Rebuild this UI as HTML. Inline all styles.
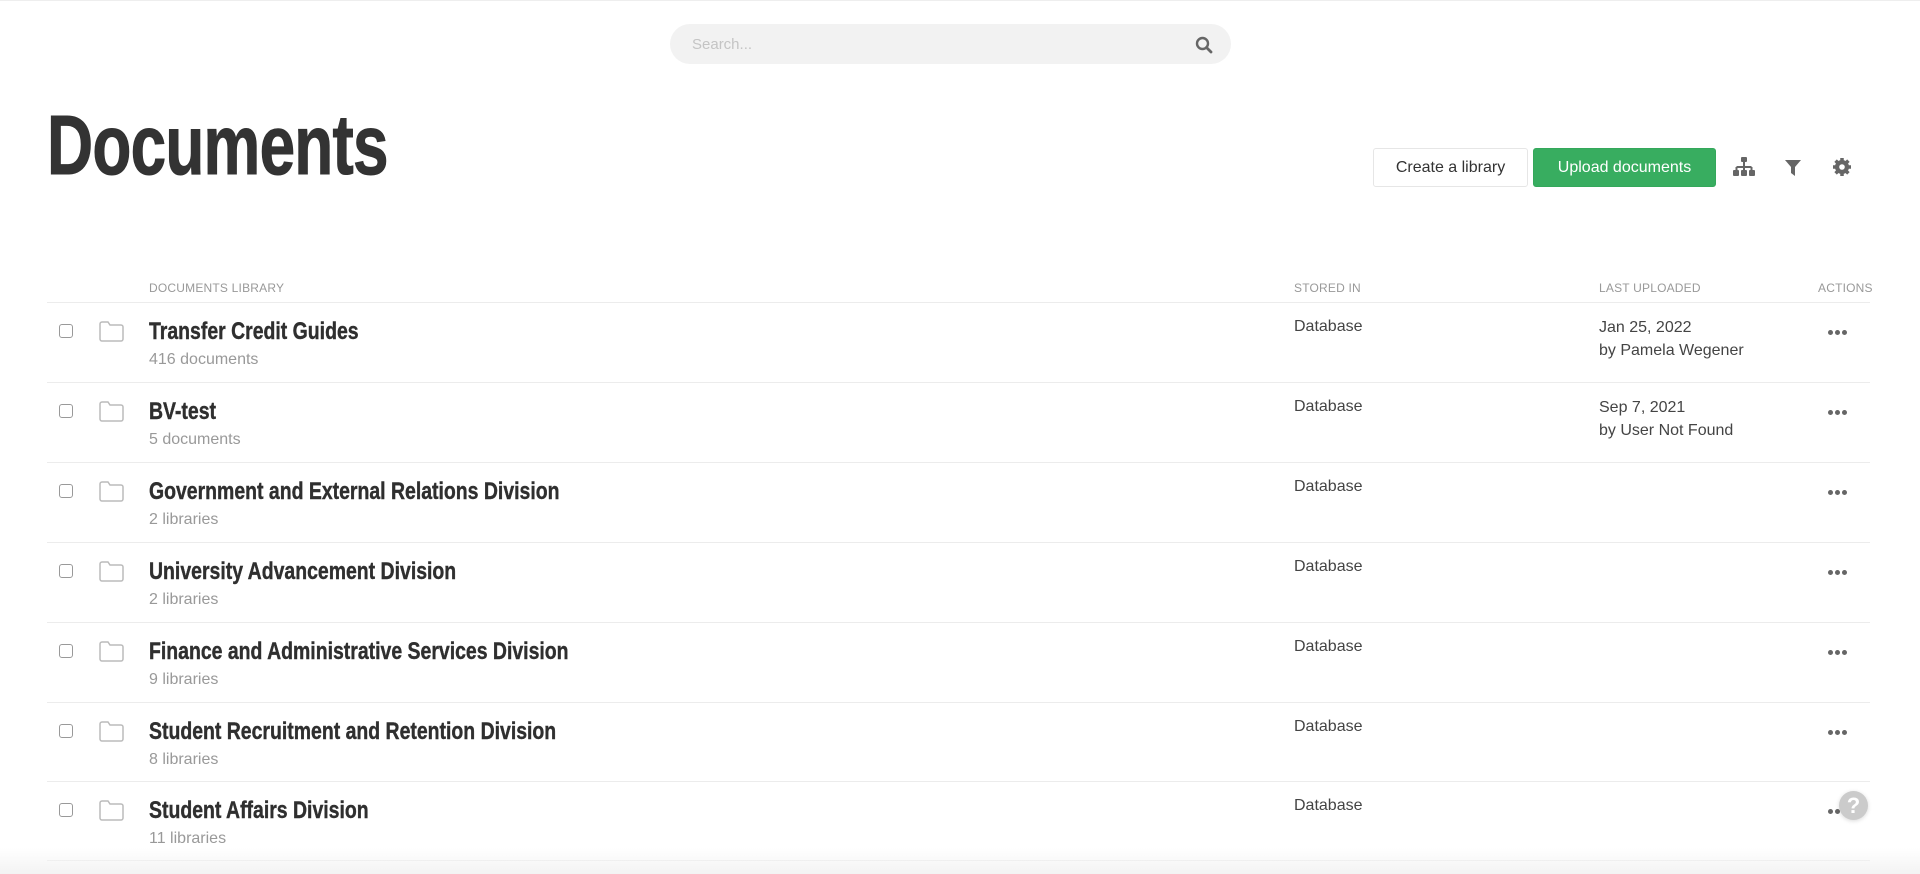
<!DOCTYPE html>
<html><head><meta charset="utf-8"><style>
*{box-sizing:border-box;margin:0;padding:0}
body{width:1920px;height:874px;overflow:hidden;background:#fff;font-family:"Liberation Sans",sans-serif;color:#333;position:relative}
.abs{position:absolute}
.search{left:670px;top:24px;width:561px;height:40px;border-radius:20px;background:#f2f2f2}
.search span{position:absolute;left:22px;top:12px;font-size:15px;color:#c4c4c4}
h1{position:absolute;left:47px;top:97px;font-size:84px;font-weight:bold;color:#333;transform:scaleX(.76);transform-origin:left top;letter-spacing:-1px;-webkit-text-stroke:1px #333}
.btn{position:absolute;top:148px;height:39px;border-radius:3px;font-size:16px;line-height:38px;text-align:center}
.b1{left:1373px;width:155px;border:1px solid #e6e6e6;color:#333}
.b2{left:1533px;width:183px;background:#38ad60;color:#fff;border:1px solid #34a85b}
.hd{position:absolute;top:281px;font-size:12px;color:#999;letter-spacing:.2px}
.line{position:absolute;left:47px;width:1823px;height:1px;background:#ececec}
.row{position:absolute;left:0;width:1920px;height:80px}
.cb{position:absolute;left:59px;top:22px;width:14px;height:14px;border:1.5px solid #999;border-radius:3px}
.fold{position:absolute;left:99px;top:19px}
.t{position:absolute;left:149px;top:16px;font-size:24px;font-weight:bold;color:#2f2f2f;transform:scaleX(.81);transform-origin:left top;white-space:nowrap;-webkit-text-stroke:.4px #2f2f2f}
.s{position:absolute;left:149px;top:49px;font-size:16px;color:#999}
.db{position:absolute;left:1294px;top:16px;font-size:16px;color:#444}
.lu{position:absolute;left:1599px;top:14px;font-size:16px;color:#444;line-height:23px}
.dots{position:absolute;left:1828px;top:28px;display:flex;gap:2px}
.dots i{width:5px;height:5px;border-radius:50%;background:#666;display:block}
</style></head><body>
<div class="abs" style="left:0;top:0;width:1920px;height:1px;background:#eee"></div>
<div class="abs search"><span>Search...</span>
<svg class="abs" style="left:525px;top:12px" width="18" height="18" viewBox="0 0 18 18"><circle cx="7.5" cy="7.5" r="5.5" fill="none" stroke="#666" stroke-width="2.4"/><path d="M11.5 11.5L16 16" stroke="#666" stroke-width="2.8" stroke-linecap="round"/></svg></div>
<h1>Documents</h1>
<div class="btn b1">Create a library</div>
<div class="btn b2">Upload documents</div>
<svg class="abs" style="left:1733px;top:157px" width="22" height="20" viewBox="0 0 22 20"><rect x="8" y="0" width="6" height="5" rx="1" fill="#666"/><path d="M11 5v5M3.5 10h15M3.5 10v4M11 10v4M18.5 10v4" stroke="#666" stroke-width="2" fill="none"/><rect x="0" y="13" width="6" height="6" rx="1" fill="#666"/><rect x="8" y="13" width="6" height="6" rx="1" fill="#666"/><rect x="16" y="13" width="6" height="6" rx="1" fill="#666"/></svg>
<svg class="abs" style="left:1784px;top:159px" width="18" height="18" viewBox="0 0 18 18"><path d="M1 1h16l-6 7v9l-4-3V8z" fill="#666"/></svg>
<svg class="abs" style="left:1832px;top:157px" width="20" height="20" viewBox="0 0 20 20"><g fill="#666"><circle cx="10" cy="10" r="7"/><g stroke="#666" stroke-width="3.5"><path d="M10 1v18M1 10h18M3.6 3.6l12.8 12.8M16.4 3.6L3.6 16.4"/></g></g><circle cx="10" cy="10" r="2.8" fill="#fff"/></svg>
<div class="hd" style="left:149px">DOCUMENTS LIBRARY</div>
<div class="hd" style="left:1294px">STORED IN</div>
<div class="hd" style="left:1599px">LAST UPLOADED</div>
<div class="hd" style="left:1818px">ACTIONS</div>
<div class="line" style="top:302px"></div>

<div class="row" style="top:302px"><div class="cb"></div><svg class="fold" width="25" height="21" viewBox="0 0 25 21"><path d="M1 3a2 2 0 0 1 2-2h6l2 3h11a2 2 0 0 1 2 2v12a2 2 0 0 1-2 2H3a2 2 0 0 1-2-2z" fill="none" stroke="#bbb" stroke-width="1.5"/></svg><div class="t">Transfer Credit Guides</div><div class="s">416 documents</div><div class="db">Database</div><div class="lu">Jan 25, 2022<br>by Pamela Wegener</div><div class="dots"><i></i><i></i><i></i></div></div>
<div class="line" style="top:382px"></div>
<div class="row" style="top:382px"><div class="cb"></div><svg class="fold" width="25" height="21" viewBox="0 0 25 21"><path d="M1 3a2 2 0 0 1 2-2h6l2 3h11a2 2 0 0 1 2 2v12a2 2 0 0 1-2 2H3a2 2 0 0 1-2-2z" fill="none" stroke="#bbb" stroke-width="1.5"/></svg><div class="t">BV-test</div><div class="s">5 documents</div><div class="db">Database</div><div class="lu">Sep 7, 2021<br>by User Not Found</div><div class="dots"><i></i><i></i><i></i></div></div>
<div class="line" style="top:462px"></div>
<div class="row" style="top:462px"><div class="cb"></div><svg class="fold" width="25" height="21" viewBox="0 0 25 21"><path d="M1 3a2 2 0 0 1 2-2h6l2 3h11a2 2 0 0 1 2 2v12a2 2 0 0 1-2 2H3a2 2 0 0 1-2-2z" fill="none" stroke="#bbb" stroke-width="1.5"/></svg><div class="t">Government and External Relations Division</div><div class="s">2 libraries</div><div class="db">Database</div><div class="dots"><i></i><i></i><i></i></div></div>
<div class="line" style="top:542px"></div>
<div class="row" style="top:542px"><div class="cb"></div><svg class="fold" width="25" height="21" viewBox="0 0 25 21"><path d="M1 3a2 2 0 0 1 2-2h6l2 3h11a2 2 0 0 1 2 2v12a2 2 0 0 1-2 2H3a2 2 0 0 1-2-2z" fill="none" stroke="#bbb" stroke-width="1.5"/></svg><div class="t">University Advancement Division</div><div class="s">2 libraries</div><div class="db">Database</div><div class="dots"><i></i><i></i><i></i></div></div>
<div class="line" style="top:622px"></div>
<div class="row" style="top:622px"><div class="cb"></div><svg class="fold" width="25" height="21" viewBox="0 0 25 21"><path d="M1 3a2 2 0 0 1 2-2h6l2 3h11a2 2 0 0 1 2 2v12a2 2 0 0 1-2 2H3a2 2 0 0 1-2-2z" fill="none" stroke="#bbb" stroke-width="1.5"/></svg><div class="t">Finance and Administrative Services Division</div><div class="s">9 libraries</div><div class="db">Database</div><div class="dots"><i></i><i></i><i></i></div></div>
<div class="line" style="top:702px"></div>
<div class="row" style="top:702px"><div class="cb"></div><svg class="fold" width="25" height="21" viewBox="0 0 25 21"><path d="M1 3a2 2 0 0 1 2-2h6l2 3h11a2 2 0 0 1 2 2v12a2 2 0 0 1-2 2H3a2 2 0 0 1-2-2z" fill="none" stroke="#bbb" stroke-width="1.5"/></svg><div class="t">Student Recruitment and Retention Division</div><div class="s">8 libraries</div><div class="db">Database</div><div class="dots"><i></i><i></i><i></i></div></div>
<div class="line" style="top:781px"></div>
<div class="row" style="top:781px"><div class="cb"></div><svg class="fold" width="25" height="21" viewBox="0 0 25 21"><path d="M1 3a2 2 0 0 1 2-2h6l2 3h11a2 2 0 0 1 2 2v12a2 2 0 0 1-2 2H3a2 2 0 0 1-2-2z" fill="none" stroke="#bbb" stroke-width="1.5"/></svg><div class="t">Student Affairs Division</div><div class="s">11 libraries</div><div class="db">Database</div><div class="dots"><i></i><i></i><i></i></div></div>
<div class="line" style="top:860px"></div>
<div class="abs" style="left:0;top:848px;width:1920px;height:26px;background:linear-gradient(#fff0,#f3f3f3)"></div>
<div class="abs" style="left:1839px;top:791px;width:29px;height:29px;border-radius:50%;background:#cbcbcb;color:#fff;font-weight:bold;font-size:22px;text-align:center;line-height:29px;box-shadow:0 1px 4px rgba(0,0,0,.15)">?</div>
</body></html>
